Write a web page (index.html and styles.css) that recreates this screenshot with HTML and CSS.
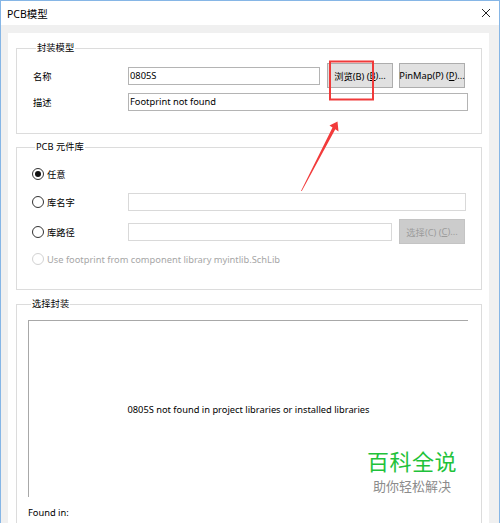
FILE: index.html
```html
<!DOCTYPE html>
<html lang="zh">
<head>
<meta charset="utf-8">
<title>PCB模型</title>
<link rel="stylesheet" href="styles.css">
</head>
<body>
<div class="window">
  <div class="titlebar">
    <span class="title">PCB模型</span>
    <svg class="close" width="10" height="10" viewBox="0 0 10 10"><path d="M1 1 L9 9 M9 1 L1 9" stroke="#222" stroke-width="1" fill="none"/></svg>
  </div>
  <div class="client">
    <div class="panel">
      <div class="group g1">
        <div class="gtitle-wrap"><span class="gtitle">封装模型</span></div>
        <div class="row r1">
          <span class="lbl">名称</span>
          <div class="input in-name">0805S</div>
          <div class="btn b-browse">浏览(B) (<u>B</u>)...</div>
          <div class="btn b-pin">PinMap(P) (<u>P</u>)...</div>
        </div>
        <div class="row r2">
          <span class="lbl">描述</span>
          <div class="input in-desc">Footprint not found</div>
        </div>
      </div>

      <div class="group g2">
        <div class="gtitle-wrap"><span class="gtitle">PCB 元件库</span></div>
        <div class="row ra">
          <span class="rlbl"><span class="radio checked"></span>任意</span>
        </div>
        <div class="row rb">
          <span class="rlbl"><span class="radio"></span>库名字</span>
          <div class="input light in-lib"></div>
        </div>
        <div class="row rc">
          <span class="rlbl"><span class="radio"></span>库路径</span>
          <div class="input light in-path"></div>
          <div class="btn disabled b-sel">选择(C) (<u>C</u>)...</div>
        </div>
        <div class="row rd">
          <span class="rlbl dis"><span class="radio dis"></span>Use footprint from component library myintlib.SchLib</span>
        </div>
      </div>

      <div class="group g3">
        <div class="gtitle-wrap"><span class="gtitle">选择封装</span></div>
        <div class="preview">0805S not found in project libraries or installed libraries</div>
        <div class="found">Found in:</div>
      </div>
    </div>
  </div>

  <svg class="annot" width="500" height="523" viewBox="0 0 500 523">
    <rect x="330" y="61.5" width="43" height="38" fill="none" stroke="#f03a3a" stroke-width="2"/>
    <polygon points="301,191 332.5,127.5 329.5,125.5 337.5,121.5 338.5,131.5 335.3,129.2 301.8,191" fill="#f23b3b"/>
  </svg>

  <div class="watermark">
    <div class="wm-main">百科全说</div>
    <div class="wm-sub">助你轻松解决</div>
  </div>
</div>
</body>
</html>
```

FILE: styles.css
```css
* { box-sizing: border-box; }
html, body { margin: 0; padding: 0; }
body {
  width: 500px;
  height: 523px;
  overflow: hidden;
  font-family: "Noto Sans", "Noto Sans CJK SC", sans-serif;
  font-size: 9.3px;
  color: #000;
  background: #f0f0f0;
}
.window {
  position: relative;
  width: 500px;
  height: 523px;
  border: 1px solid #86b6e6;
  border-bottom: none;
  background: #f0f0f0;
  display: flex;
  flex-direction: column;
  overflow: hidden;
}
.titlebar {
  flex: none;
  height: 24px;
  background: #ffffff;
  display: flex;
  align-items: center;
  justify-content: space-between;
  padding: 0 7px 0 6px;
}
.title { font-size: 10.5px; color: #000; }
.close { display: block; margin-right: 1px; }
.client {
  flex: 1;
  min-height: 0;
  overflow: hidden;
  padding: 8px 10px 0 7px;
  display: flex;
}
.panel {
  flex: 1;
  background: #ffffff;
  padding: 15px 7px 0 8px;
}
.group {
  border: 1px solid #dcdcdc;
}
.gtitle-wrap {
  height: 16px;
  line-height: 16px;
  margin-top: -9px;
  padding-left: 3px;
}
.gtitle {
  display: inline-block;
  background: #ffffff;
  padding: 0 1px;
  color: #000;
}
.row {
  display: flex;
  align-items: center;
}
.lbl { width: 95px; flex: none; }
.input {
  height: 18px;
  border: 1px solid #b4b4b4;
  background: #fff;
  padding-left: 1px;
  line-height: 16px;
  flex: none;
  color: #000;
}
.input.light { border-color: #d9d9d9; }
.btn {
  height: 25px;
  width: 66px;
  flex: none;
  background: #e1e1e1;
  border: 1px solid #adadad;
  display: flex;
  align-items: center;
  justify-content: center;
  white-space: nowrap;
  color: #000;
}
.btn.disabled {
  background: #cccccc;
  border-color: #c4c4c4;
  color: #9c9c9c;
}

.g1 { padding: 0 0 22px 16px; }
.g1 .r1 { height: 25px; margin-top: 7px; }
.g1 .r2 { height: 18px; margin-top: 5px; }
.in-name { width: 192px; }
.b-browse { margin-left: 7px; }
.b-pin { margin-left: 6px; }
.in-desc { width: 340px; }

.g2 { margin-top: 13px; padding: 0 0 21px 15px; }
.g2 .ra { height: 18px; margin-top: 10px; }
.g2 .rb { height: 18px; margin-top: 10px; }
.g2 .rc { height: 25px; margin-top: 8px; }
.g2 .rd { height: 18px; margin-top: 6px; }
.rlbl {
  width: 96px;
  flex: none;
  display: flex;
  align-items: center;
  white-space: nowrap;
}
.rlbl.dis { width: auto; color: #a6a6a6; }
.radio {
  flex: none;
  width: 12px;
  height: 12px;
  border: 1px solid #333;
  border-radius: 50%;
  margin-right: 3px;
  display: flex;
  align-items: center;
  justify-content: center;
  background: #fff;
}
.radio.checked::after {
  content: "";
  width: 6px;
  height: 6px;
  border-radius: 50%;
  background: #111;
}
.radio.dis { border-color: #d2d2d2; }
.in-lib { width: 338px; }
.in-path { width: 264px; }
.b-sel { margin-left: 7px; }

.g3 { margin-top: 14px; padding: 0 0 0 11px; height: 240px; }
.preview {
  margin-top: 8px;
  width: 440px;
  height: 177px;
  border-top: 1px solid #a8a8a8;
  border-left: 1px solid #a8a8a8;
  display: flex;
  align-items: center;
  justify-content: center;
  color: #000;
}
.found {
  margin-top: 8px;
  line-height: 16px;
}

.annot {
  position: absolute;
  left: -1px;
  top: -1px;
  pointer-events: none;
}
.watermark {
  position: absolute;
  left: 364px;
  top: 447px;
  text-align: center;
  width: 94px;
}
.wm-main {
  font-family: "Noto Sans CJK SC", sans-serif;
  font-size: 22px;
  line-height: 24px;
  color: #1fc23a;
  letter-spacing: 0.5px;
}
.wm-sub {
  margin-top: 6px;
  font-family: "Noto Sans CJK SC", sans-serif;
  font-size: 13px;
  line-height: 15px;
  color: #8c8c8c;
}
```
